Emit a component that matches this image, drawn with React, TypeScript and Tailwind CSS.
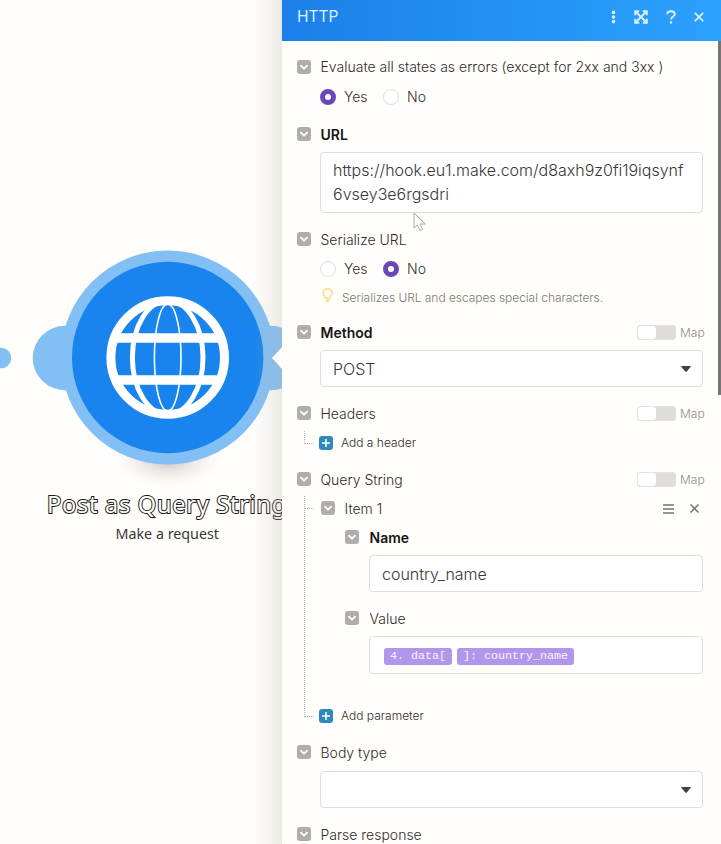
import React from 'react';

type Kids = { children?: React.ReactNode };

function Chevron() {
  return (
    <svg className="h-[14px] w-[14px] shrink-0" viewBox="0 0 14 14">
      <rect width="14" height="14" rx="3" fill="#b2adac" />
      <path d="M3.9 5.7 7 8.6l3.1-2.9" fill="none" stroke="#fff" strokeWidth="1.8" strokeLinecap="round" strokeLinejoin="round" />
    </svg>
  );
}

function Plus() {
  return (
    <svg className="h-[14px] w-[14px] shrink-0" viewBox="0 0 14 14">
      <rect width="14" height="14" rx="3" fill="#2f89bd" />
      <path d="M7 3v8M3 7h8" stroke="#fff" strokeWidth="1.5" />
    </svg>
  );
}

function MapToggle() {
  return (
    <div className="ml-auto -mr-px flex items-center text-[12px] text-[#928d8c]">
      <div className="h-[15px] w-[39px] rounded-[3px] border border-[#e4e0de] bg-[#dfdcda]">
        <div className="h-[13px] w-[18px] rounded-[3px] bg-white" />
      </div>
      <span className="ml-1 w-[24px] pt-px">Map</span>
    </div>
  );
}

function Label({ children, className = '', textClass = '', bold, map }: Kids & { className?: string; textClass?: string; bold?: boolean; map?: boolean }) {
  return (
    <div className={`flex h-6 items-center ${className}`}>
      <Chevron />
      <span className={`ml-[9.5px] whitespace-nowrap ${textClass} ${bold ? 'font-semibold text-[#161414]' : ''}`}>{children}</span>
      {map && <MapToggle />}
    </div>
  );
}

function Radio({ on, children }: Kids & { on?: boolean }) {
  return (
    <div className="flex w-[63px] items-center">
      <div className={`h-4 w-4 rounded-full bg-white ${on ? 'border-[5px] border-[#6b46b8]' : 'border border-[#e2dcde]'}`} />
      <span className="ml-2 pb-px">{children}</span>
    </div>
  );
}

function Select({ children, className = '' }: Kids & { className?: string }) {
  return (
    <div className={`ml-[23px] flex h-[37px] items-center rounded-[4px] border border-[#e1dddb] bg-white pl-3 pr-[11px] text-[16px] text-[#3a3635] ${className}`}>
      {children}
      <svg className="ml-auto h-[6px] w-[10px]" viewBox="0 0 10 6">
        <path d="M.5 0h9q.8 0 .2.7L6 5.3q-1 1-2 0L.3.7Q-.3 0 .5 0z" fill="#444140" />
      </svg>
    </div>
  );
}

function FlowCanvas() {
  return (
    <div className="relative h-full w-[282px] shrink-0 overflow-hidden bg-[#fffefb]">
      <svg className="absolute left-0 top-0 h-[844px] w-[282px]" viewBox="0 0 282 844">
        <defs>
          <radialGradient id="glow">
            <stop offset="0.2" stopColor="#d9d4d0" />
            <stop offset="1" stopColor="#fffefb" stopOpacity="0" />
          </radialGradient>
          <clipPath id="globe"><circle cx="167.7" cy="357.5" r="57" /></clipPath>
        </defs>
        <ellipse cx="168" cy="459" rx="60" ry="32" fill="url(#glow)" />
        <g fill="#82bff5">
          <circle cx="1" cy="358" r="10.3" />
          <circle cx="65" cy="358" r="32.3" />
          <circle cx="271" cy="358" r="32.3" />
          <circle cx="167.7" cy="357.5" r="107" />
        </g>
        <circle cx="167.7" cy="357.5" r="95.7" fill="#1984ed" />
        <circle cx="167.7" cy="357.5" r="56.8" fill="none" stroke="#fff" strokeWidth="9" />
        <g clipPath="url(#globe)" fill="none" stroke="#fff">
          <path d="M108 338h120M108 380h120" strokeWidth="9.4" />
          <ellipse cx="167.7" cy="357.5" rx="35.3" ry="57" strokeWidth="5" />
          <ellipse cx="167.7" cy="357.5" rx="13.3" ry="53.5" strokeWidth="1.6" />
        </g>
      </svg>
      <div className="absolute left-[47px] top-[486px] whitespace-nowrap font-['Noto_Sans'] text-[23.5px] leading-[36px] tracking-[0.75px] text-[#fffefb] [-webkit-text-stroke:2px_#1b1919] [paint-order:stroke_fill]">Post as Query String</div>
      <div className="absolute left-[115.5px] top-[523px] whitespace-nowrap font-['Noto_Sans'] text-[14.3px] leading-[22px] text-[#393636]">Make a request</div>
      <div className="absolute right-0 top-0 h-full w-7 bg-linear-to-r from-transparent to-[#b8afa944]" />
      <svg className="absolute right-0 top-[347px] h-[22px] w-[10px]" viewBox="0 0 10 22"><path d="M10 0v22L0 11z" fill="#fffefb" /></svg>
    </div>
  );
}

function PanelHeader() {
  return (
    <div className="flex h-[41px] shrink-0 items-center bg-linear-to-r from-[#1b80e9] to-[#2ca1fc] pb-2 pl-[15px] text-[#d9f2ff]">
      <span className="text-[15.5px] font-normal">HTTP</span>
      <svg className="ml-auto h-[14px] w-[5px]" viewBox="0 0 5 14" fill="currentColor">
        <circle cx="2.5" cy="2.4" r="1.8" /><circle cx="2.5" cy="7" r="1.8" /><circle cx="2.5" cy="11.6" r="1.8" />
      </svg>
      <svg className="ml-[18px] h-[14px] w-[14px]" viewBox="0 0 14 14" fill="none" stroke="currentColor" strokeWidth="1.9">
        <path d="M2 2l10 10M12 2 2 12" />
        <path d="M1.2 5.2V1.2h4M8.8 1.2h4v4M12.8 8.8v4h-4M5.2 12.8h-4v-4" />
      </svg>
      <svg className="ml-[18px] h-[14px] w-[10px]" viewBox="0 0 10 14" fill="none" stroke="currentColor" strokeWidth="1.9">
        <path d="M1.2 4.2C1.2 2.2 2.8 1.2 5 1.2s3.8 1 3.8 3C8.8 6.5 5 6.5 5 9.6" />
        <path d="M5 11.3v2.2" strokeWidth="2.2" />
      </svg>
      <svg className="ml-[18px] mr-[17px] h-[10px] w-[10px]" viewBox="0 0 10 10" fill="none" stroke="currentColor" strokeWidth="1.7"><path d="M.8.8l8.4 8.4M9.2.8.8 9.2" /></svg>
    </div>
  );
}

function AddRow({ children }: Kids) {
  return (
    <div className="flex h-6 items-center text-[12px]">
      <Plus />
      <span className="ml-2">{children}</span>
    </div>
  );
}

function Chip({ children }: Kids) {
  return <span className="mt-[2px] h-[17px] whitespace-pre rounded-[3px] bg-[#b197ec] px-[6px] font-['Liberation_Mono'] text-[11.67px] font-normal leading-[16px] text-[#fff0ff]">{children}</span>;
}

export default function App() {
  return (
    <div className="flex h-[844px] w-[721px] overflow-hidden bg-[#fffefb] font-['Inter'] text-[14px] text-[#302d2c]">
      <FlowCanvas />
      <div className="relative flex w-[439px] flex-col font-light">
        <PanelHeader />
        <div className="flex h-[803px] flex-col overflow-hidden pl-[15px] pr-[18px] pt-[14px] *:shrink-0">
          <Label textClass="pb-px">Evaluate all states as errors (except for 2xx and 3xx )</Label>
          <div className="ml-[23px] mt-[6px] flex h-6 items-center"><Radio on>Yes</Radio><Radio>No</Radio></div>
          <Label bold className="mt-[13px]">URL</Label>
          <div className="ml-[23px] mt-[6px] h-[61px] rounded-[4px] border border-[#e1dddb] bg-white px-3 pt-[6px] text-[16px] leading-[23.5px] text-[#3a3635]">
            https://hook.eu1.make.com/d8axh9z0fi19iqsynf<br />6vsey3e6rgsdri
          </div>
          <Label className="mt-[14px]">Serialize URL</Label>
          <div className="ml-[23px] mt-[6px] flex h-6 items-center"><Radio>Yes</Radio><Radio on>No</Radio></div>
          <div className="ml-[25px] mt-[6px] flex h-5 items-center text-[12px] text-[#7d7776]">
            <svg className="mb-[3px] h-[15px] w-[11px]" viewBox="0 0 11 15" fill="none" stroke="#f5e49b" strokeWidth="1.8">
              <path d="M3.5 10.5C3.5 8 1 7.5 1 4.9 1 2.5 3 1 5.5 1S10 2.5 10 4.9c0 2.6-2.5 3.1-2.5 5.6z" />
              <path d="M3.5 12.8h4" strokeWidth="2.4" />
            </svg>
            <span className="ml-[9px] pt-px tracking-[-0.04px]">Serializes URL and escapes special characters.</span>
          </div>
          <Label bold map className="mt-[13px]">Method</Label>
          <Select className="mt-[6px]">POST</Select>
          <Label map className="mt-[14px]">Headers</Label>
          <div className="mt-[6px] flex">
            <div className="ml-[7px] h-[13px] w-[10px] border-b border-l border-dotted border-[#bcb8b6]" />
            <div className="ml-[5px]"><AddRow>Add a header</AddRow></div>
          </div>
          <Label map className="mt-[12px]">Query String</Label>
          <div className="mt-[5px] flex">
            <div className="ml-[7px] h-[221px] w-[10px] shrink-0 border-b border-l border-dotted border-[#b4b0ae]">
              <div className="h-[13px] border-b border-dotted border-[#bcb8b6]" />
            </div>
            <div className="ml-[5px] w-[384px]">
              <div className="ml-[2px] flex items-center">
                <Label>Item 1</Label>
                <svg className="ml-auto mt-px h-[10px] w-[11px]" viewBox="0 0 11 10" stroke="#77716f" strokeWidth="1.3"><path d="M0 1h11M0 5h11M0 9h11" /></svg>
                <svg className="ml-[16px] mr-[4px] mt-px h-[9px] w-[9px]" viewBox="0 0 9 9" stroke="#77716f" strokeWidth="1.5"><path d="m.5.5 8 8m0-8-8 8" /></svg>
              </div>
              <div className="ml-[26px]">
                <Label bold className="mt-[5px]"><span className="ml-px">Name</span></Label>
                <div className="ml-[24px] mt-[6px] flex h-[37px] items-center rounded-[4px] border border-[#e1dddb] bg-white px-3 text-[16px] text-[#3a3635]">country_name</div>
                <Label className="mt-[14px]"><span className="ml-px">Value</span></Label>
                <div className="ml-[24px] mt-[6px] flex h-[38px] items-center gap-[5px] rounded-[4px] border border-[#e1dddb] bg-white px-[14px]">
                  <Chip>4. data[</Chip><Chip>]: country_name</Chip>
                </div>
              </div>
              <div className="mt-[30px]"><AddRow>Add parameter</AddRow></div>
            </div>
          </div>
          <Label className="mt-[12px]">Body type</Label>
          <Select className="mt-[7px]" />
          <Label className="mt-[14px]">Parse response</Label>
        </div>
        <div className="absolute right-0 top-[41px] h-[354px] w-[3px] bg-[#777475]" />
        <svg className="absolute left-[131px] top-[212px] h-[20px] w-[14px]" viewBox="0 0 14 20"><path d="M1 1v15l3.3-3 2.7 5.5 2.5-1.2L7 12h5.5z" fill="#fffefb" stroke="#aaa6a4" /></svg>
      </div>
    </div>
  );
}
